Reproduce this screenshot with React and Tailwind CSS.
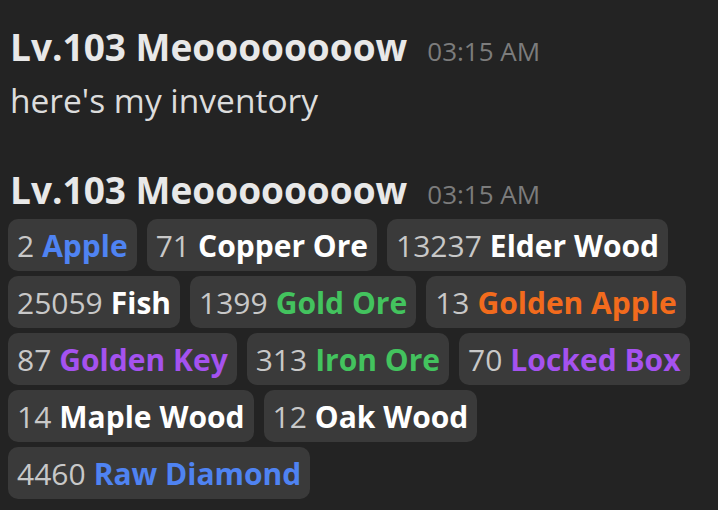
const items = [
  { n: 2, name: "Apple", c: "text-[#4f83f2]" },
  { n: 71, name: "Copper Ore", c: "text-white" },
  { n: 13237, name: "Elder Wood", c: "text-white" },
  { n: 25059, name: "Fish", c: "text-white" },
  { n: 1399, name: "Gold Ore", c: "text-[#43c35e]" },
  { n: 13, name: "Golden Apple", c: "text-[#f26b1d]" },
  { n: 87, name: "Golden Key", c: "text-[#a552ef]" },
  { n: 313, name: "Iron Ore", c: "text-[#43c35e]" },
  { n: 70, name: "Locked Box", c: "text-[#a552ef]" },
  { n: 14, name: "Maple Wood", c: "text-white" },
  { n: 12, name: "Oak Wood", c: "text-white" },
  { n: 4460, name: "Raw Diamond", c: "text-[#4f83f2]" },
]

const Header = () => (
  <div className="flex items-baseline gap-[20px] h-[42px] leading-[42px]">
    <span className="font-bold text-[37px] text-[#e8e8e8]">Lv.103 Meoooooooow</span>
    <span className="text-[26px] text-[#7c7c7c]">03:15 AM</span>
  </div>
)

export default function App() {
  return (
    <div className="w-[718px] h-[510px] bg-[#232323] px-[10px] pt-[26px] font-['Open_Sans',sans-serif] overflow-hidden">
      <Header />
      <div className="text-[33.5px] text-[#dcdcdc] leading-[42px] mt-[11px]">here's my inventory</div>
      <div className="mt-[48px]">
        <Header />
        <div className="flex flex-wrap gap-x-[10px] gap-y-[5px] mt-[8px] -ml-[2px] w-[708px]">
          {items.map((it) => (
            <div key={it.name} className="bg-[#3a3a3a] rounded-[10px] h-[52px] px-[9px] flex items-center text-[30px]">
              <span className="text-[#c8c8c8]">{it.n}</span>
              <span className={`font-bold ml-[8px] ${it.c}`}>{it.name}</span>
            </div>
          ))}
        </div>
      </div>
    </div>
  )
}
